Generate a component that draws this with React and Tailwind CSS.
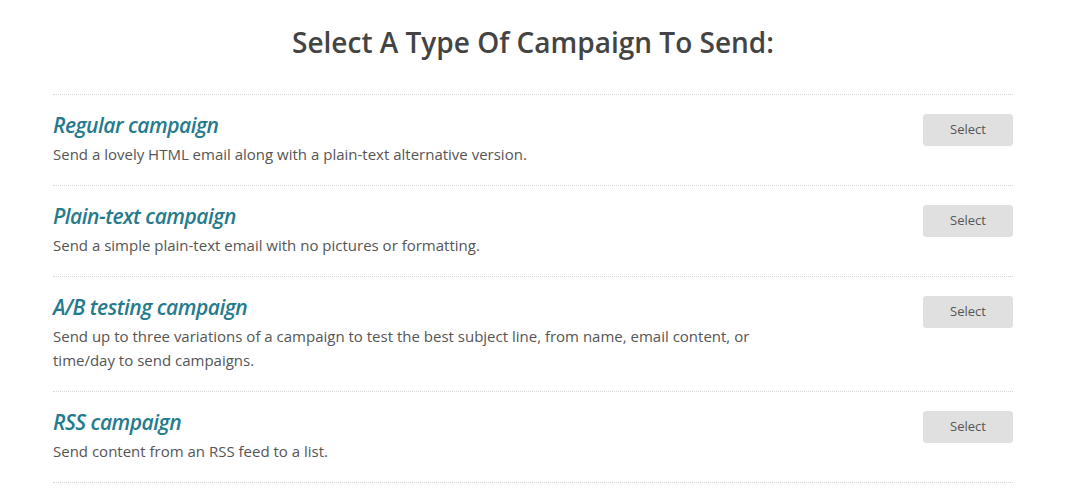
const campaigns = [
  { title: 'Regular campaign', desc: 'Send a lovely HTML email along with a plain-text alternative version.' },
  { title: 'Plain-text campaign', desc: 'Send a simple plain-text email with no pictures or formatting.' },
  { title: 'A/B testing campaign', desc: 'Send up to three variations of a campaign to test the best subject line, from name, email content, or time/day to send campaigns.' },
  { title: 'RSS campaign', desc: 'Send content from an RSS feed to a list.' },
];

export default function App() {
  return (
    <div className="min-h-screen bg-white" style={{ fontFamily: '"Open Sans", "Noto Sans", sans-serif' }}>
      <div className="w-[1066px]">
        <div className="mx-auto w-[960px] pt-[22px]">
          <h1 className="text-center text-[28px] leading-[40px] font-semibold text-[#444] mb-[32px]">
            Select A Type Of Campaign To Send:
          </h1>
          <div className="border-t border-dotted border-[#d6d6d6]">
            {campaigns.map((c) => (
              <div key={c.title} className="flex items-start justify-between border-b border-dotted border-[#d6d6d6] pt-[15px] pb-[19px]">
                <div className="w-[720px]">
                  <h2 className="text-[21px] leading-[30px] font-semibold italic text-[#257b8d] tracking-[-0.5px]">{c.title}</h2>
                  <p className="mt-0.5 text-[15px] leading-[24px] text-[#555]">{c.desc}</p>
                </div>
                <button className="mt-[4px] w-[90px] h-[32px] rounded-[3px] bg-[#e0e0e0] text-[13px] text-[#555]">
                  Select
                </button>
              </div>
            ))}
          </div>
        </div>
      </div>
    </div>
  );
}
